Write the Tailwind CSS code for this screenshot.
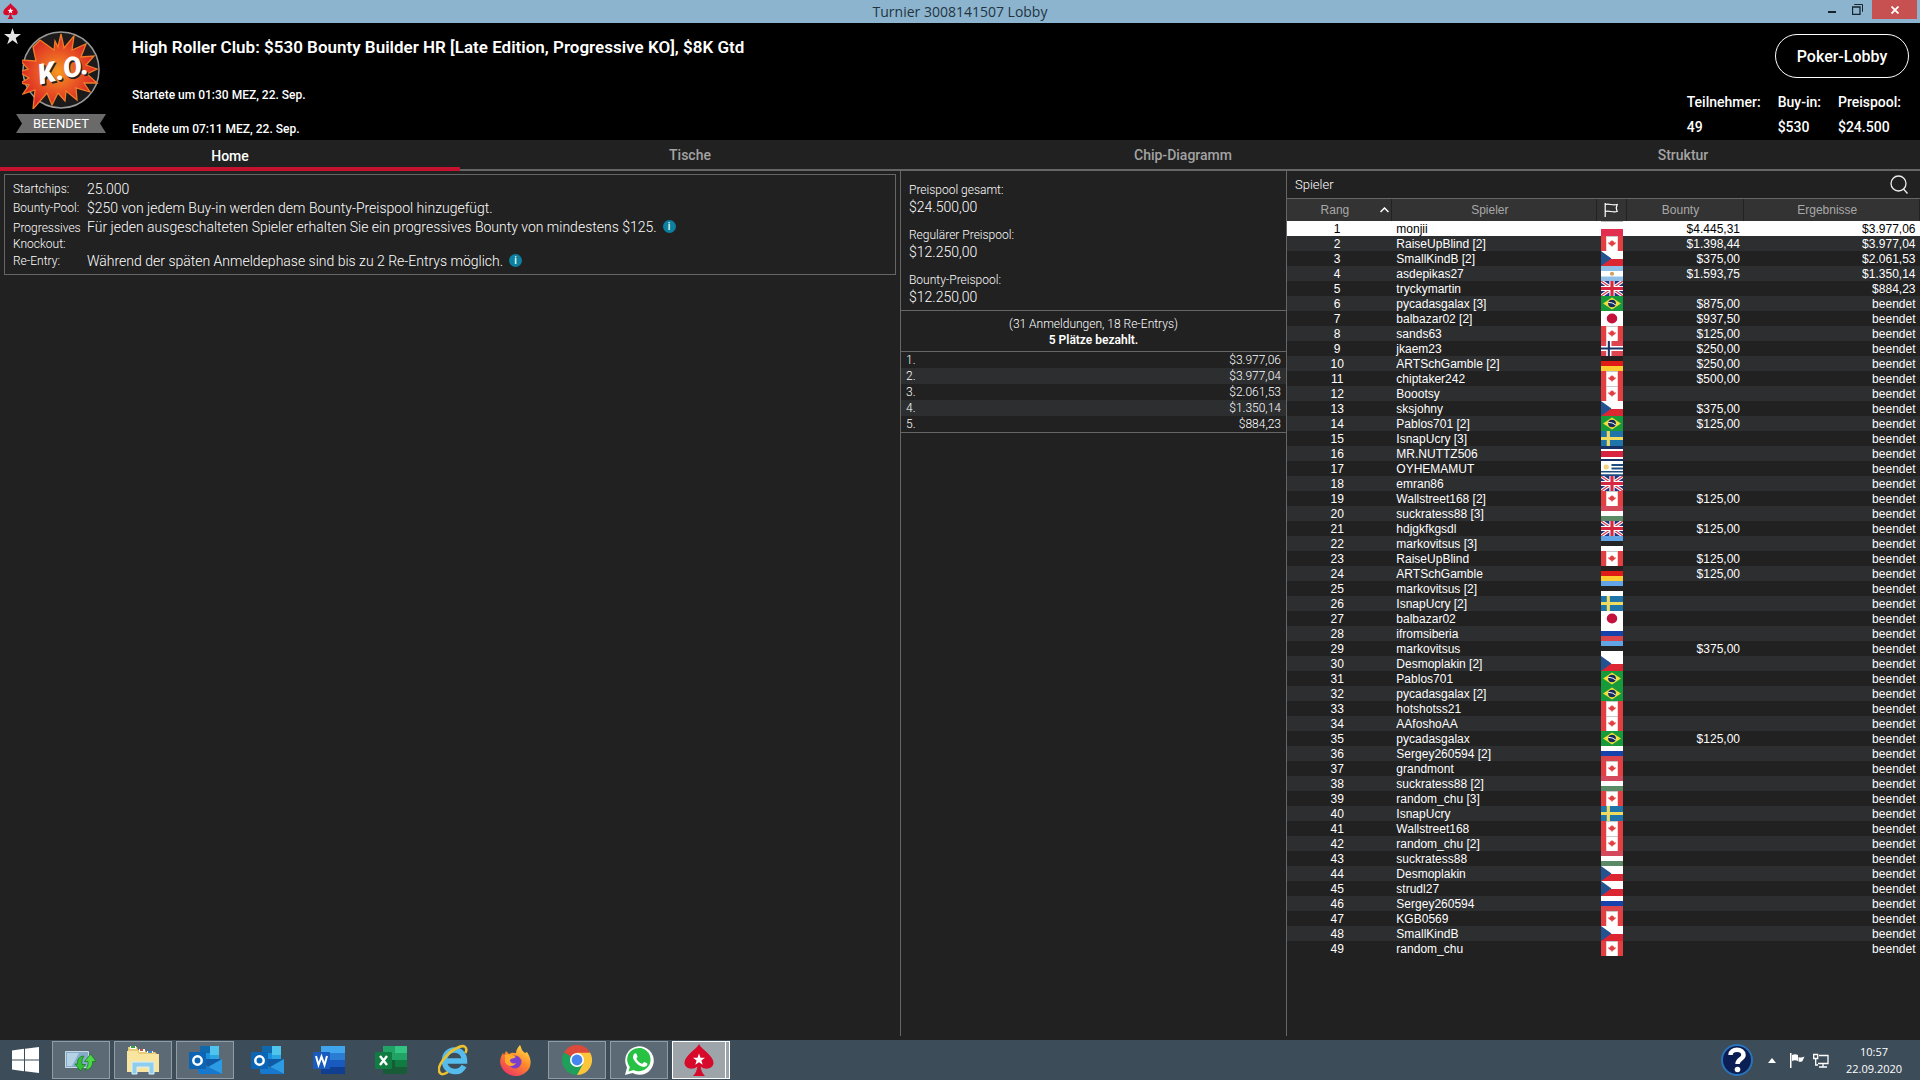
<!DOCTYPE html>
<html lang="de">
<head>
  <meta charset="UTF-8">
  <meta name="viewport" content="width=device-width, initial-scale=1.0">
  <title>Turnier 3008141507 Lobby</title>
  <script src="https://cdn.jsdelivr.net/npm/@tailwindcss/browser@4"></script>
</head>
<body class="bg-[#212121] text-white font-['Roboto',sans-serif]">
  <!-- Shared symbols: spade logo and flags -->
  <svg class="hidden" xmlns="http://www.w3.org/2000/svg">
    <symbol id="spade" viewBox="0 0 30 32">
      <path fill="#d70a2c" d="M15 0C13 5 1 11 .5 18.500C.2 24 8 27 13.300 22.500C13.200 26 11.500 29.500 9 32H21C18.500 29.500 16.800 26 16.700 22.500C22 27 29.800 24 29.500 18.500C29 11 17 5 15 0Z"/>
      <path fill="#fff" d="M15 9.500l1.500 4.200 4.500.1-3.600 2.700 1.300 4.300-3.700-2.500-3.700 2.500 1.300-4.300L9 13.800l4.500-.1z"/>
    </symbol>
    <symbol id="flag-pl" viewBox="0 0 21 15" preserveAspectRatio="none"><path fill="#fff" d="M0 0h21v8H0z"/><path fill="#e22f50" d="M0 8h21v7H0z"/><path fill="#bbb" d="M0 0h21v1H0z"/></symbol>
    <symbol id="flag-ca" viewBox="0 0 21 15" preserveAspectRatio="none"><path fill="#e33e42" d="M0 0h21v15H0z"/><path fill="#fff" d="M5 0h11v15H5z"/><path fill="#e33e42" d="M10.500 4l1 1.500 1-.3v1.500l1.700-.5-.4 1.500-2.500 2h-.5V11h-.6V9.700h-.5l-2.500-2-.4-1.500 1.700.5V5.200l1 .3z"/><path fill="#bbb" d="M5 0h11v.8H5z"/></symbol>
    <symbol id="flag-cz" viewBox="0 0 21 15" preserveAspectRatio="none"><path fill="#fff" d="M0 0h21v8H0z"/><path fill="#dc2733" d="M0 8h21v7H0z"/><path fill="#24518f" d="M0 0l10 7.500L0 15z"/></symbol>
    <symbol id="flag-ar" viewBox="0 0 21 15" preserveAspectRatio="none"><path fill="#8fbfe6" d="M0 0h21v15H0z"/><path fill="#fff" d="M0 5h21v5.500H0z"/><circle cx="10.500" cy="7.700" r="2" fill="#cfa25c"/></symbol>
    <symbol id="flag-gb" viewBox="0 0 21 15" preserveAspectRatio="none"><path fill="#26307e" d="M0 0h21v15H0z"/><path stroke="#fff" stroke-width="3.400" d="M0 0l21 15M21 0L0 15"/><path stroke="#d83a50" stroke-width="1.200" d="M0 0l21 15M21 0L0 15"/><path fill="#fff" d="M8 0h5v15H8zM0 5h21v5H0z"/><path fill="#d62640" d="M9 0h3v15H9zM0 6h21v3H0z"/></symbol>
    <symbol id="flag-br" viewBox="0 0 21 15" preserveAspectRatio="none"><path fill="#179b3a" d="M0 0h21v15H0z"/><path fill="#f0df3d" d="M10.500 1.500l8.500 6-8.500 6-8.500-6z"/><circle cx="10.500" cy="7.500" r="3.700" fill="#142a5c"/><path stroke="#fff" fill="none" d="M7 6.500q4-.5 7 2.500"/></symbol>
    <symbol id="flag-jp" viewBox="0 0 21 15" preserveAspectRatio="none"><path fill="#fff" d="M0 0h21v15H0z"/><circle cx="10.500" cy="7.500" r="5" fill="#c4123c"/></symbol>
    <symbol id="flag-no" viewBox="0 0 21 15" preserveAspectRatio="none"><path fill="#dd4450" d="M0 0h21v15H0z"/><path fill="#fff" d="M5 0h5v15H5zM0 5h21v5H0z"/><path fill="#1b3467" d="M6.500 0h2v15h-2zM0 6.500h21v2H0z"/></symbol>
    <symbol id="flag-de" viewBox="0 0 21 15" preserveAspectRatio="none"><path fill="#262020" d="M0 0h21v5H0z"/><path fill="#e01b16" d="M0 5h21v5H0z"/><path fill="#fdcb30" d="M0 10h21v5H0z"/></symbol>
    <symbol id="flag-se" viewBox="0 0 21 15" preserveAspectRatio="none"><path fill="#1f74aa" d="M0 0h21v15H0z"/><path fill="#eedb62" d="M5.500 0h3v15h-3zM0 6h21v3H0z"/></symbol>
    <symbol id="flag-cr" viewBox="0 0 21 15" preserveAspectRatio="none"><path fill="#173068" d="M0 0h21v15H0z"/><path fill="#fff" d="M0 3h21v10H0z"/><path fill="#d8243e" d="M0 5h21v6H0z"/></symbol>
    <symbol id="flag-uy" viewBox="0 0 21 15" preserveAspectRatio="none"><path fill="#fff" d="M0 0h21v15H0z"/><path fill="#1c4c80" d="M10 3h11v2H10zM10 6.500h11v2H10zM0 10h21v1.500H0zM0 13.200h21V15H0z"/><circle cx="5" cy="6" r="2.500" fill="#f2d280"/></symbol>
    <symbol id="flag-hu" viewBox="0 0 21 15" preserveAspectRatio="none"><path fill="#d44a5c" d="M0 0h21v5H0z"/><path fill="#fff" d="M0 5h21v5H0z"/><path fill="#5a8a66" d="M0 10h21v5H0z"/></symbol>
    <symbol id="flag-ee" viewBox="0 0 21 15" preserveAspectRatio="none"><path fill="#62a5e6" d="M0 0h21v5H0z"/><path fill="#222426" d="M0 5h21v5H0z"/><path fill="#fff" d="M0 10h21v5H0z"/></symbol>
    <symbol id="flag-ru" viewBox="0 0 21 15" preserveAspectRatio="none"><path fill="#fff" d="M0 0h21v5H0z"/><path fill="#1642ab" d="M0 5h21v5H0z"/><path fill="#d9434a" d="M0 10h21v5H0z"/></symbol>
    <symbol id="outlook" viewBox="0 0 33 30">
      <path fill="#1068ad" d="M11 1h10v14H11z"/><path fill="#1b90dc" d="M11 8h10v9H11z"/><path fill="#4fc5ee" d="M21 1h9v9h-9z"/><path fill="#2aa5e2" d="M21 10h9v9h-9z"/><path fill="#0f5ba8" d="M9 14l24 0-12 9z"/><path fill="#2b9be4" d="M33 14v15L19 22z"/><path fill="#1679cf" d="M9 17l24 12H11q-2 0-2-2z"/><rect y="7" width="17" height="17" rx="1" fill="#0c64b5"/>
      <circle cx="8.500" cy="15.500" r="4.200" fill="none" stroke="#fff" stroke-width="2.500"/>
    </symbol>
  </svg>

  <div class="min-h-screen flex flex-col">
    <!-- Window title bar -->
    <header class="relative h-[23px] bg-[#8cb4cf] flex items-start justify-between">
      <svg class="w-[15px] h-4 ml-[3px] mt-[3px]"><use href="#spade"/></svg>
      <h1 class="absolute inset-x-0 text-center text-[14px] leading-[23px] text-[#23343f] font-['Open_Sans',sans-serif]">Turnier 3008141507 Lobby</h1>
      <div class="relative flex pr-[3px]">
        <button type="button" aria-label="Minimieren" class="w-7 h-[19px] flex items-center justify-center">
          <svg class="w-2 h-5" viewBox="0 0 8 20"><path fill="#16242e" d="M0 11h8v2H0z"/></svg>
        </button>
        <button type="button" aria-label="Wiederherstellen" class="w-[26px] pr-1 h-[19px] flex items-center justify-center">
          <svg class="w-[11px] h-[11px]" viewBox="0 0 11 11" fill="none" stroke="#16242e"><path d="M2.500 1V.5h8v7H10"/><path d="M.5 3h7.500v7.500H.5z" stroke-width="1.300"/></svg>
        </button>
        <button type="button" aria-label="Schließen" class="w-[45px] h-[19px] bg-[#c75050] flex items-center justify-center">
          <svg class="w-2 h-2" viewBox="0 0 8 8" stroke="#fff" stroke-width="1.800"><path d="M.5.5l7 7M7.500.5l-7 7"/></svg>
        </button>
      </div>
    </header>

    <!-- Tournament header -->
    <section class="h-[117px] bg-black flex">
      <button type="button" aria-label="Favorit" class="w-[18px] pl-1 self-start pt-[5px]">
        <svg class="w-[17px] h-[17px]" viewBox="0 0 20 20"><path fill="#e6e6e6" d="M10 0l2.400 7.200H20l-6.200 4.500L16.200 19 10 14.500 3.800 19l2.400-7.300L0 7.200h7.600z"/></svg>
      </button>
      <div class="w-[86px] pt-2 flex flex-col items-center">
        <svg class="w-[78px] h-[78px]" viewBox="0 0 78 78">
          <defs>
            <radialGradient id="blast"><stop offset="0" stop-color="#f6981f"/><stop offset=".5" stop-color="#ea5a24"/><stop offset="1" stop-color="#d92524"/></radialGradient>
          </defs>
          <circle cx="39" cy="39" r="38" fill="#1c1a1a" stroke="#999" stroke-width="1.500"/>
          <path fill="url(#blast)" stroke="#ef7d28" stroke-width="1.300" d="M18 9l14 10 1-9 3 6 3-13 3 14 10-12-2 14 14-6-5 13 13-1-8 9 11 4-10 5 10 9-13 0 6 9-14-4 1 12-11-9-1 10-7-8-6 12-5-12-14 16 2-19-12 4 6-9-9-2 9-5-10-6 9-3-8-9 16 1-3-14z"/>
          <text x="41" y="48" text-anchor="middle" transform="rotate(-13 41 39)" font-family="Roboto" font-size="28" font-weight="900" font-style="italic" fill="#222" dx="1" dy="2">K.O.</text>
          <text x="41" y="48" text-anchor="middle" transform="rotate(-13 41 39)" font-family="Roboto" font-size="28" font-weight="900" font-style="italic" fill="#fff">K.O.</text>
        </svg>
        <div class="relative mt-[5px] w-[90px] h-[19px] flex items-center justify-center">
          <svg class="absolute inset-0 w-full h-full" viewBox="0 0 90 19" preserveAspectRatio="none"><path fill="#6a6a6a" d="M0 0h90l-6 9.500 6 9.500H0l6-9.500z"/></svg>
          <span class="relative text-[13px] leading-[19px]">BEENDET</span>
        </div>
      </div>
      <div class="pl-7 pt-[14px] flex-1 font-medium">
        <h2 class="text-[17px] leading-[20px] font-semibold">High Roller Club: $530 Bounty Builder HR [Late Edition, Progressive KO], $8K Gtd</h2>
        <p class="mt-7 text-[12px] leading-[20px]">Startete um 01:30 MEZ, 22. Sep.</p>
        <p class="mt-[14px] text-[12px] leading-[20px]">Endete um 07:11 MEZ, 22. Sep.</p>
      </div>
      <div class="pt-[11px] pr-[11px] flex flex-col items-end font-medium">
        <button type="button" class="w-[134px] h-11 pt-px rounded-full border border-white text-[16px] font-medium">Poker-Lobby</button>
        <dl class="mt-3 mr-2 flex gap-[17px] text-[14px] leading-[25px]">
          <div><dt>Teilnehmer:</dt><dd>49</dd></div>
          <div><dt>Buy-in:</dt><dd>$530</dd></div>
          <div><dt>Preispool:</dt><dd>$24.500</dd></div>
        </dl>
      </div>
    </section>

    <!-- Tabs -->
    <nav class="h-[31px] grid grid-cols-[460fr_460fr_526fr_474fr] border-b-2 border-[#666] text-[14px] leading-[31px] text-center font-medium text-[#a3a3a3]">
      <a href="#" class="h-[31px] pt-px border-b-4 border-[#c4122f] text-white">Home</a>
      <a href="#">Tische</a>
      <a href="#">Chip-Diagramm</a>
      <a href="#">Struktur</a>
    </nav>

    <main class="flex-1 grid grid-cols-[900fr_386fr_634fr] pb-1">
      <!-- Tournament info -->
      <section class="p-[3px]">
        <dl class="border border-[#666] mr-px ml-px h-[101px] pt-[5px] pl-2 grid grid-cols-[74px_1fr] content-start text-[14px] font-light">
          <dt class="text-[12px] leading-[19px]">Startchips:</dt><dd class="leading-[19px]">25.000</dd>
          <dt class="text-[12px] leading-[19px]">Bounty-Pool:</dt><dd class="leading-[19px]">$250 von jedem Buy-in werden dem Bounty-Preispool hinzugefügt.</dd>
          <dt class="text-[12px] leading-[16px] pt-[2px]">Progressives Knockout:</dt>
          <dd class="leading-[19px] flex items-start gap-[6px]">Für jeden ausgeschalteten Spieler erhalten Sie ein progressives Bounty von mindestens $125.
            <button type="button" aria-label="Info" class="mt-[2px] size-[13px] rounded-full bg-[#0b809f] text-[10px] leading-[13px] font-medium">i</button></dd>
          <dt class="text-[12px] leading-[19px]">Re-Entry:</dt>
          <dd class="leading-[19px] flex items-start gap-[6px]">Während der späten Anmeldephase sind bis zu 2 Re-Entrys möglich.
            <button type="button" aria-label="Info" class="mt-[2px] size-[13px] rounded-full bg-[#0b809f] text-[10px] leading-[13px] font-medium">i</button></dd>
        </dl>
      </section>

      <!-- Prize pool -->
      <section class="border-l border-[#666] font-light">
        <dl class="h-[140px] pt-[10px] pl-2 border-b border-[#666] text-[12px] leading-[18px]">
          <dt>Preispool gesamt:</dt><dd class="text-[14px] leading-[16px] mb-[11px]">$24.500,00</dd>
          <dt>Regulärer Preispool:</dt><dd class="text-[14px] leading-[16px] mb-[11px]">$12.250,00</dd>
          <dt>Bounty-Preispool:</dt><dd class="text-[14px] leading-[16px]">$12.250,00</dd>
        </dl>
        <div class="h-[41px] pt-[5px] border-b border-[#666] text-center text-[12px] leading-[16px]">
          <p>(31 Anmeldungen, 18 Re-Entrys)</p>
          <p class="font-semibold">5 Plätze bezahlt.</p>
        </div>
        <table class="w-full border-b border-[#666] text-[12px] leading-[15px] font-light">
          <tbody>
            <tr><td class="pt-px pl-[5px]">1.</td><td class="pt-px pr-[5px] text-right">$3.977,06</td></tr>
            <tr class="bg-[#2c2e30]"><td class="pt-px pl-[5px]">2.</td><td class="pt-px pr-[5px] text-right">$3.977,04</td></tr>
            <tr><td class="pt-px pl-[5px]">3.</td><td class="pt-px pr-[5px] text-right">$2.061,53</td></tr>
            <tr class="bg-[#2c2e30]"><td class="pt-px pl-[5px]">4.</td><td class="pt-px pr-[5px] text-right">$1.350,14</td></tr>
            <tr><td class="pt-px pl-[5px]">5.</td><td class="pt-px pr-[5px] text-right">$884,23</td></tr>
          </tbody>
        </table>
      </section>

      <!-- Player list -->
      <section class="border-l border-[#666]">
        <div class="h-7 pl-2 pr-[11px] flex items-center justify-between border-b border-[#666]">
          <h3 class="text-[13px] font-light">Spieler</h3>
          <button type="button" aria-label="Spieler suchen">
            <svg class="w-[19px] h-[19px]" viewBox="0 0 19 19" fill="none" stroke="#eee" stroke-width="1.300"><circle cx="8.500" cy="8.500" r="7.500"/><path d="M13.500 14l4 4.500"/></svg>
          </button>
        </div>
        <table class="w-full table-fixed font-['Liberation_Sans',sans-serif] text-[12px]">
          <colgroup><col class="w-[16.500%]"><col class="w-[32.400%]"><col class="w-[4.700%]"><col class="w-[18.500%]"><col></colgroup>
          <thead>
            <tr class="h-[22px] bg-[#333] text-[#a8a8a8] text-[12px] leading-[22px]">
              <th class="relative pr-2 font-normal border-r border-[#222]">Rang
                <svg class="absolute right-[2px] top-2 w-[9px] h-[6px]" viewBox="0 0 9 6" fill="none" stroke="#fff" stroke-width="1.500"><path d="M.5 5l4-4 4 4"/></svg></th>
              <th class="pr-2 font-normal border-r border-[#222]">Spieler</th>
              <th class="border-r border-[#222]" aria-label="Land">
                <svg class="mx-auto w-[14px] h-[14px]" viewBox="0 0 14 14" fill="none" stroke="#fff" stroke-width="1.200"><path d="M1.200 0v14M1.200 1.500c4-1.500 7 1.500 12 0l-1 3.500 1 3.500c-5 1.500-8-1.500-12 0"/></svg></th>
              <th class="pr-2 font-normal border-r border-[#222]">Bounty</th>
              <th class="pr-2 font-normal border-r border-[#222]">Ergebnisse</th>
            </tr>
          </thead>
          <tbody id="players"></tbody>
        </table>
      </section>
    </main>

    <!-- Taskbar -->
    <footer class="h-10 bg-[#3c4c59] flex items-center justify-between">
      <div class="flex items-center gap-1">
        <button type="button" aria-label="Start" class="w-12 pl-[2px] flex justify-center">
          <svg class="w-[27px] h-[26px]" viewBox="0 0 27 26" fill="#fff"><path d="M0 3.500l12-1.700v10.700H0zM13 1.700L27 0v12.500H13zM0 13.500h12v10.700L0 22.500zM13 13.500h14V26l-14-1.700z"/></svg>
        </button>
        <button type="button" aria-label="Synchronisieren" class="w-[58px] h-[38px] border border-[#929ca4] bg-[#5c6a75] flex items-center justify-center">
          <svg class="w-8 h-6" viewBox="0 0 32 24"><path fill="#86abc8" stroke="#c8d8e4" d="M.5 3.500h23v16H.5z"/><path fill="#b4d1e5" d="M2 5h12L7 18H2z"/><path fill="#35bd35" stroke="#0c7717" stroke-width=".7" d="M19 8c-5 0-7 4-6.500 8H10l5.500 7 5-6.500h-3.500c-.5-3 0-6 2-8.500z"/><path fill="#4fd548" stroke="#0c7717" stroke-width=".7" d="M20 22c5 0 8-4 7.500-8.500H31L25.500 6l-6 7.500H23c.5 3-.5 6-3 8.500z"/></svg>
        </button>
        <button type="button" aria-label="Explorer" class="w-[58px] h-[38px] border border-[#929ca4] bg-[#5c6a75] flex items-center justify-center">
          <svg class="w-8 h-[30px]" viewBox="0 0 32 30"><path fill="#e9cb73" d="M1 2h9l1 3h7l1 2h9l3 3v16H1z"/><path fill="#fff" d="M3 1h6v3H3zM12 4h6v3h-6zM20 6h6v2h-6z"/><path fill="#3ba344" d="M4 1h4v2H4z"/><path fill="#c5533c" d="M13 4h3v2h-3z"/><path fill="#458ac5" d="M21 6h4v2h-4z"/><path fill="#f8e59f" d="M0 6h10l2 3h20v18H0z"/><path fill="#8ecdeb" stroke="#d8f0fb" d="M5 17h22v12h-5v-7H10v7H5z"/></svg>
        </button>
        <button type="button" aria-label="Outlook" class="w-[58px] h-[38px] border border-[#929ca4] bg-[#5c6a75] flex items-center justify-center">
          <svg class="w-[33px] h-[30px]"><use href="#outlook"/></svg>
        </button>
        <button type="button" aria-label="Outlook" class="w-[58px] h-[38px] flex items-center justify-center">
          <svg class="w-[33px] h-[30px]"><use href="#outlook"/></svg>
        </button>
        <button type="button" aria-label="Word" class="w-[58px] h-[38px] flex items-center justify-center">
          <svg class="w-8 h-[30px]" viewBox="0 0 32 30"><path fill="#41a5ee" d="M8 1h24v7H8z"/><path fill="#2b7cd3" d="M8 8h24v7H8z"/><path fill="#185abd" d="M8 15h24v7H8z"/><path fill="#103f91" d="M8 22h24v7H8z"/><rect y="7" width="17" height="17" rx="1" fill="#185abd"/><path stroke="#fff" stroke-width="2" fill="none" d="M3 11l2.500 9 3-8.500 3 8.500L14 11"/></svg>
        </button>
        <button type="button" aria-label="Excel" class="w-[58px] h-[38px] flex items-center justify-center">
          <svg class="w-8 h-[30px]" viewBox="0 0 32 30"><path fill="#21a366" d="M8 1h12v14H8z"/><path fill="#33c481" d="M20 1h12v7H20z"/><path fill="#21a366" d="M20 8h12v7H20z"/><path fill="#185c37" d="M8 15h24v14H8z"/><path fill="#107c41" d="M20 15h12v7H20z"/><rect y="7" width="17" height="17" rx="1" fill="#107c41"/><path stroke="#fff" stroke-width="2.400" d="M5 11l7 9M12 11l-7 9"/></svg>
        </button>
        <button type="button" aria-label="Internet Explorer" class="w-[58px] h-[38px] flex items-center justify-center">
          <svg class="w-[30px] h-8" viewBox="0 0 30 32" fill="none"><path stroke="#55bcec" stroke-width="5.500" d="M26 22c-2 4-6 6-10 5.500-6-.5-9.500-5-9.500-11S11 6 16.500 6 26.500 10 26.500 17H8"/><path stroke="#ecc12f" stroke-width="2.600" d="M27.500 9C30 3 26 0 19 4 10 8-3 23 2 29c1.500 2 5 1 8-1"/></svg>
        </button>
        <button type="button" aria-label="Firefox" class="w-[58px] h-[38px] flex items-center justify-center">
          <svg class="w-[31px] h-[31px]" viewBox="0 0 31 31"><defs><linearGradient id="fox" x1=".8" y1="0" x2=".2" y2="1"><stop offset="0" stop-color="#ffe14a"/><stop offset=".45" stop-color="#ff8a2a"/><stop offset="1" stop-color="#ec2f68"/></linearGradient></defs><path fill="url(#fox)" d="M20 0c2 4 1 5 5 8l2-1c6 9 4 17-2 21-8 6-20 3-24-7C-1 16 1 11 3 8l1 2 2-4 3 3c3-2 5-1 7-1 0-3 2-6 4-8z"/><circle cx="15" cy="17" r="6.500" fill="#7a3fcc"/><path fill="#ffab2d" d="M5 10c4-2 8 0 11 2-2 2-5 1-6 3 0 3 3 4 6 3-2 4-9 4-11-1z"/></svg>
        </button>
        <button type="button" aria-label="Chrome" class="w-[58px] h-[38px] border border-[#929ca4] bg-[#5c6a75] flex items-center justify-center">
          <svg class="w-[30px] h-[30px]" viewBox="0 0 30 30"><path fill="#db4a3b" d="M15 15L2 7.500a15 15 0 0 1 26 0z"/><path fill="#fbc63c" d="M15 15V30A15 15 0 0 0 28 7.500H15z"/><path fill="#1ea05a" d="M15 15l6 4-6 11A15 15 0 0 1 2 7.500z"/><path fill="#db4a3b" d="M15 7.500h13L22 5 8 7z"/><circle cx="15" cy="15" r="7" fill="#fff"/><circle cx="15" cy="15" r="5.400" fill="#4486ee"/></svg>
        </button>
        <button type="button" aria-label="WhatsApp" class="w-[58px] h-[38px] border border-[#929ca4] bg-[#5c6a75] flex items-center justify-center">
          <svg class="w-[29px] h-[29px]" viewBox="0 0 29 29"><path fill="#fff" d="M0 29l2-7.500A14.300 14.300 0 1 1 7.500 27z"/><path fill="#27c143" d="M3.500 25.500l1.300-4.500A11.700 11.700 0 1 1 8.500 24z"/><path fill="#fff" d="M9 8c1-1 2-1 2.500 0l1 2.500c.3 1-1.500 1.500-1 2.500 1 2 3 4 5.500 4.800 1 .2 1.500-2 2.500-1.800l2.500 1.300c1 .5 0 2.500-1 3-5 3-14-6-13-10z"/></svg>
        </button>
        <button type="button" aria-label="PokerStars" class="w-[58px] h-[38px] border border-white bg-[#9da5ab] flex">
          <span class="w-[53px] h-full border-r border-white flex items-center justify-center"><svg class="w-[30px] h-8"><use href="#spade"/></svg></span>
        </button>
      </div>
      <div class="flex items-center pr-[18px]">
        <button type="button" aria-label="Hilfe">
          <svg class="w-8 h-8" viewBox="0 0 32 32"><circle cx="16" cy="16" r="15" fill="#0b1f55" stroke="#2b73b8" stroke-width="2"/><path stroke="#fff" stroke-width="4.500" fill="none" d="M9.500 11c0-7 13-7 13 0 0 4-6 4-6 9"/><circle cx="16.500" cy="25.500" r="2.800" fill="#fff"/></svg>
        </button>
        <button type="button" aria-label="Ausgeblendete Symbole" class="ml-[15px]">
          <svg class="w-2 h-[5px]" viewBox="0 0 8 5"><path fill="#fff" d="M4 0l4 5H0z"/></svg>
        </button>
        <button type="button" aria-label="Wartungscenter" class="ml-[13px]">
          <svg class="w-4 h-[15px]" viewBox="0 0 16 15"><path fill="#fff" d="M1 0h1.500v15H1zM3 2c2-1 4-1 6 0v6C7 7 5 7 3 8zM9.500 4c2 1 3 .5 6-.5L13.500 8c-1 1-3 1-4 .5z"/></svg>
        </button>
        <button type="button" aria-label="Netzwerk" class="ml-2">
          <svg class="w-4 h-[15px]" viewBox="0 0 16 15" fill="none" stroke="#fff" stroke-width="1.300"><path d="M6 2.500h9v8H5M10 10.500V14M6 14h8M.7 1.500h4v4h-4zM2.700 5.500V12H5"/></svg>
        </button>
        <time class="ml-[17px] w-[56px] text-center whitespace-nowrap text-[11px] leading-[17px] font-['Open_Sans',sans-serif]">10:57<br>22.09.2020</time>
      </div>
    </footer>
  </div>

  <script>
    // name, flag, bounty, result (default: beendet)
    const players = [
      ['monjii', 'pl', '$4.445,31', '$3.977,06'],
      ['RaiseUpBlind [2]', 'ca', '$1.398,44', '$3.977,04'],
      ['SmallKindB [2]', 'cz', '$375,00', '$2.061,53'],
      ['asdepikas27', 'ar', '$1.593,75', '$1.350,14'],
      ['tryckymartin', 'gb', '', '$884,23'],
      ['pycadasgalax [3]', 'br', '$875,00'],
      ['balbazar02 [2]', 'jp', '$937,50'],
      ['sands63', 'ca', '$125,00'],
      ['jkaem23', 'no', '$250,00'],
      ['ARTSchGamble [2]', 'de', '$250,00'],
      ['chiptaker242', 'ca', '$500,00'],
      ['Boootsy', 'ca'],
      ['sksjohny', 'cz', '$375,00'],
      ['Pablos701 [2]', 'br', '$125,00'],
      ['IsnapUcry [3]', 'se'],
      ['MR.NUTTZ506', 'cr'],
      ['OYHEMAMUT', 'uy'],
      ['emran86', 'gb'],
      ['Wallstreet168 [2]', 'ca', '$125,00'],
      ['suckratess88 [3]', 'hu'],
      ['hdjgkfkgsdl', 'gb', '$125,00'],
      ['markovitsus [3]', 'ee'],
      ['RaiseUpBlind', 'ca', '$125,00'],
      ['ARTSchGamble', 'de', '$125,00'],
      ['markovitsus [2]', 'ee'],
      ['IsnapUcry [2]', 'se'],
      ['balbazar02', 'jp'],
      ['ifromsiberia', 'ru'],
      ['markovitsus', 'ee', '$375,00'],
      ['Desmoplakin [2]', 'cz'],
      ['Pablos701', 'br'],
      ['pycadasgalax [2]', 'br'],
      ['hotshotss21', 'ca'],
      ['AAfoshoAA', 'ca'],
      ['pycadasgalax', 'br', '$125,00'],
      ['Sergey260594 [2]', 'ru'],
      ['grandmont', 'ca'],
      ['suckratess88 [2]', 'hu'],
      ['random_chu [3]', 'ca'],
      ['IsnapUcry', 'se'],
      ['Wallstreet168', 'ca'],
      ['random_chu [2]', 'ca'],
      ['suckratess88', 'hu'],
      ['Desmoplakin', 'cz'],
      ['strudl27', 'cz'],
      ['Sergey260594', 'ru'],
      ['KGB0569', 'ca'],
      ['SmallKindB', 'cz'],
      ['random_chu', 'ca'],
    ];

    document.getElementById('players').innerHTML = players.map(([name, flag, bounty = '', result = 'beendet'], i) => `
      <tr class="h-[15px] leading-[14px] ${i === 0 ? 'bg-white text-black' : 'even:bg-[#2c2e30]'}">
        <td class="pt-px pr-1 text-center">${i + 1}</td>
        <td class="pt-px pl-[5px]">${name}</td>
        <td class="pl-[5px]"><svg class="block w-[22px] h-[15px]"><use href="#flag-${flag}"/></svg></td>
        <td class="pt-px pr-[3px] text-right">${bounty}</td>
        <td class="pt-px pr-1 text-right">${result}</td>
      </tr>`).join('');
  </script>
</body>
</html>
